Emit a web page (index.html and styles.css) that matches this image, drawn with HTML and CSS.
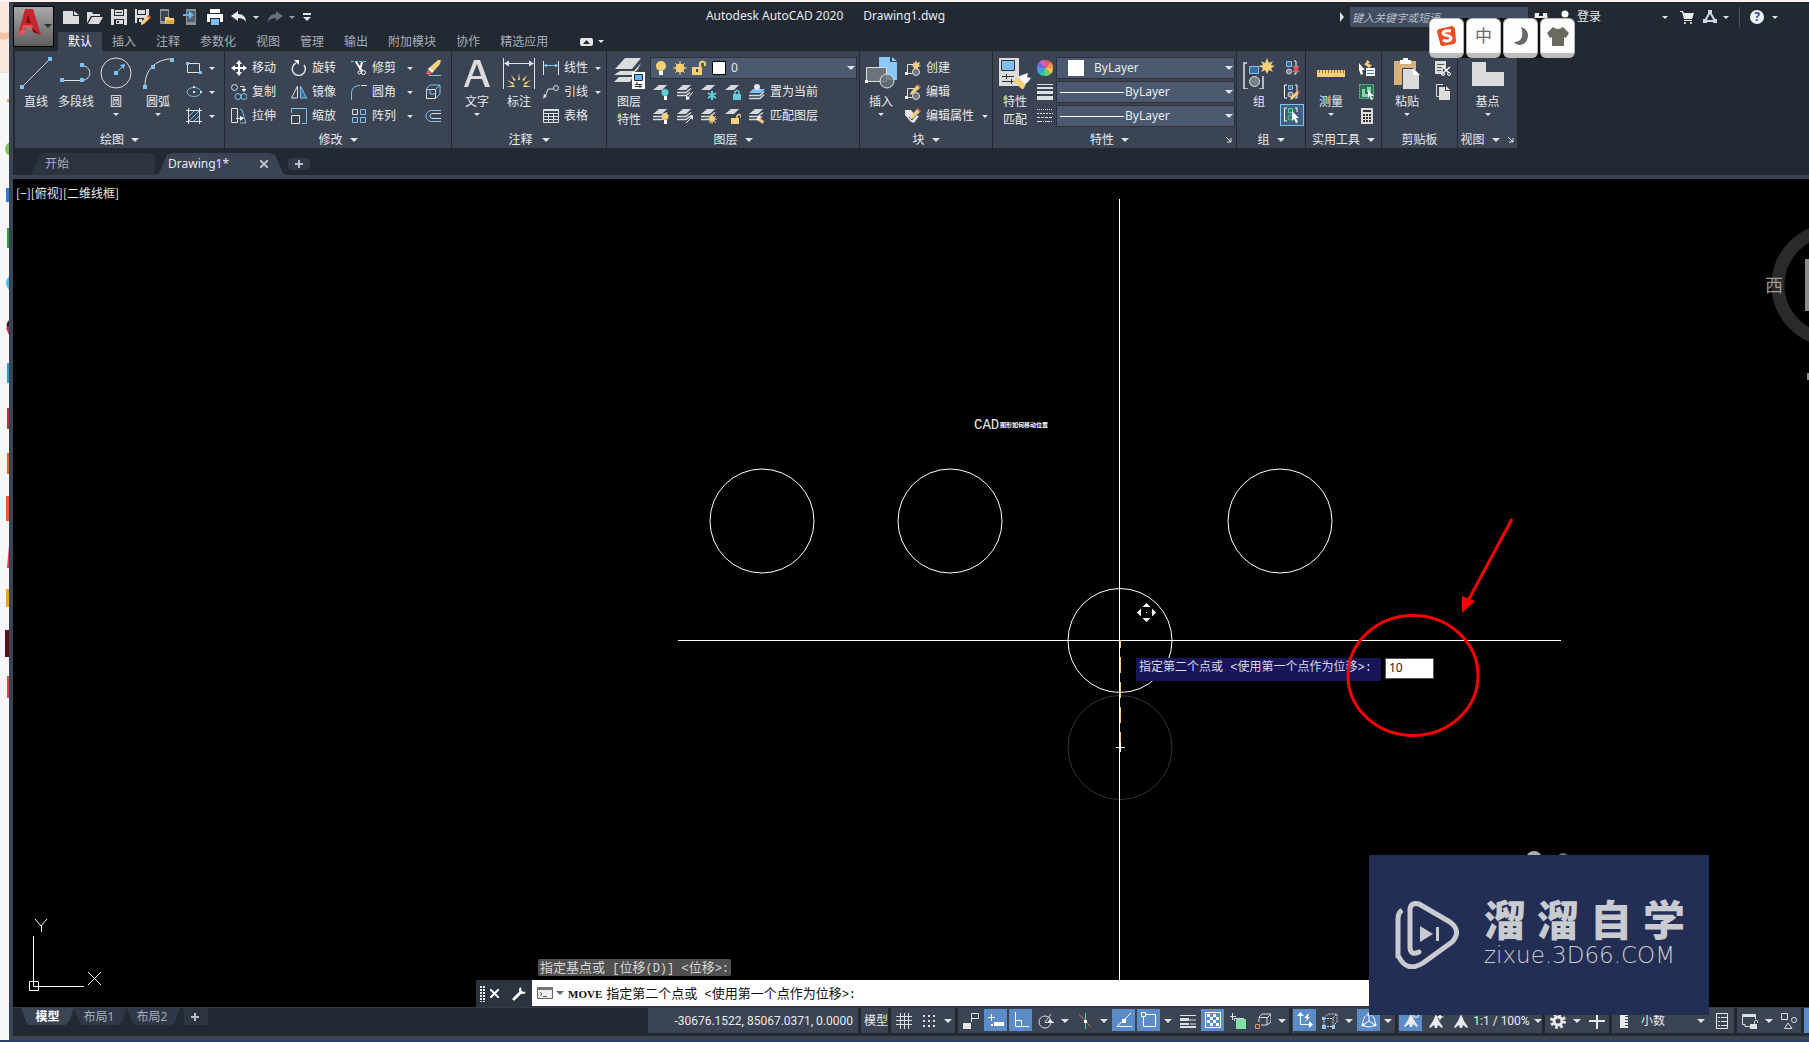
FILE: index.html
```html
<!DOCTYPE html>
<html lang="zh-CN">
<head>
<meta charset="utf-8">
<title>Autodesk AutoCAD 2020 - Drawing1.dwg</title>
<link rel="stylesheet" href="styles.css">
</head>
<body>
<svg class="sprite" aria-hidden="true">
  <defs>
    <!-- quick access -->
    <symbol id="new" viewBox="0 0 16 16"><path fill="#dcdcdc" d="M0 2h10v5h6v8H0zM11 2l5 4h-5z"/></symbol>
    <symbol id="open" viewBox="0 0 16 16"><path fill="#dcdcdc" d="M0 3h5l1 2h7v2H4L0 14zM5 8h11l-4 7H1z"/></symbol>
    <symbol id="save" viewBox="0 0 16 16"><path fill="#dcdcdc" d="M0 0h16v16H0z"/><path fill="#222933" d="M3 0h10v7H3zM3 10h10v6H3z"/><path fill="#dcdcdc" d="M4 1h8v5H4zM5 11h7v4H5z"/><path fill="#222933" d="M5 3h6v1H5zM6 12h2v2H6z"/></symbol>
    <symbol id="saveas" viewBox="0 0 16 16"><path fill="#dcdcdc" d="M0 0h14v6l-7 8H0z"/><path fill="#222933" d="M2 0h9v6H2zM2 9h7v5H2z"/><path fill="#dcdcdc" d="M3 1h7v4H3zM4 10h3v3H4z"/><path fill="#f7cf7a" d="M6 13l6-6 3 2-6 6-3 1z"/><path fill="#e0525a" d="M12 7l2-1 2 2-1 2z"/></symbol>
    <symbol id="webopen" viewBox="0 0 16 16"><path fill="#8d9299" d="M1 0h9v15H1z"/><path fill="#3c4552" d="M2 2h7v10H2z"/><path fill="#f7cf7a" d="M6 8h4l1 1h4v6H6z"/><path fill="#d9a94a" d="M8 11h8l-2 4H6z"/></symbol>
    <symbol id="websave" viewBox="0 0 16 16"><path fill="#8d9299" d="M3 0h10v16H3z"/><path fill="#56606d" d="M4 2h8v11H4z"/><path fill="#62b6f5" d="M0 5h6V2l5 4-5 4V7H0z"/></symbol>
    <symbol id="print" viewBox="0 0 16 16"><path fill="#fff" d="M3 0h10v4H3zM0 5h16v8h-3V9H3v4H0z"/><path fill="#7cc0f7" d="M4 10h8v6H4z"/></symbol>
    <symbol id="undo" viewBox="0 0 16 16"><path fill="currentColor" d="M0 7l7-5v3c5 0 8 3 8 8-2-3-4-4-8-4v3z"/></symbol>
    <symbol id="redo" viewBox="0 0 16 16"><path fill="currentColor" d="M16 7L9 2v3c-5 0-8 3-8 8 2-3 4-4 8-4v3z"/></symbol>
    <!-- draw -->
    <symbol id="line" viewBox="0 0 32 32"><path stroke="#dcdfe3" d="M3 29L29 3"/><path fill="#7fc1f0" d="M0 28h4v4H0zM28 0h4v4h-4z"/></symbol>
    <symbol id="pline" viewBox="0 0 32 32"><path stroke="#dcdfe3" fill="none" d="M2 23.500h20c11-1 10-15-1-15"/><path fill="#7fc1f0" d="M0 21h4v4H0zM20 21h4v4h-4zM20 6h4v4h-4z"/></symbol>
    <symbol id="circle" viewBox="0 0 32 32"><circle cx="16" cy="16" r="15" fill="none" stroke="#dcdfe3"/><path stroke="#7fc1f0" d="M16 16l7-7"/><path fill="#7fc1f0" d="M14 14h4v4h-4zM20 8l5-1-1 5z"/></symbol>
    <symbol id="arc" viewBox="0 0 32 32"><path fill="none" stroke="#dcdfe3" d="M3 29C3 12 14 3 28 2"/><path fill="#7fc1f0" d="M1 28h4v4H1zM9 8h4v4H9zM28 1h4v4h-4z"/></symbol>
    <symbol id="rect" viewBox="0 0 16 16"><path fill="none" stroke="#dcdfe3" d="M1.500 3.500h12v9h-12z"/><path fill="#7fc1f0" d="M0 2h3v3H0zM13 11h3v3h-3z"/></symbol>
    <symbol id="ellipse" viewBox="0 0 16 16"><ellipse cx="8" cy="8" rx="7" ry="4.500" fill="none" stroke="#7fb3dc"/><path fill="#cfe3f2" d="M7 7h2v2H7zM14 7h2v2h-2zM7 2h2v2H7z"/></symbol>
    <symbol id="hatch" viewBox="0 0 16 16"><path stroke="#7fc1f0" d="M3 8l5-5M3 13L13 3M8 13l5-5"/><path stroke="#dcdfe3" d="M2.500 0v16M13.500 0v16M0 2.500h16M0 13.500h16"/></symbol>
    <!-- modify -->
    <symbol id="move" viewBox="0 0 16 16"><path stroke="#fff" stroke-width="2" d="M8 2v12M2 8h12"/><path fill="#fff" d="M8 0l3 4H5zM8 16l3-4H5zM0 8l4-3v6zM16 8l-4-3v6z"/></symbol>
    <symbol id="rotate" viewBox="0 0 16 16"><path fill="none" stroke="#dcdfe3" stroke-width="1.500" d="M5 3a6.500 6.500 0 1 0 8 2"/><path fill="#fff" d="M3 0h5v5z"/></symbol>
    <symbol id="trim" viewBox="0 0 16 16"><path stroke="#7fc1f0" stroke-dasharray="3 1" d="M0 1.500h16"/><path stroke="#fff" stroke-width="2" fill="none" d="M5 2l6 9M11 2L9 10"/><circle cx="8.500" cy="12.500" r="1.500" fill="none" stroke="#fff"/><circle cx="12.500" cy="12.500" r="2" fill="none" stroke="#fff"/></symbol>
    <symbol id="erase" viewBox="0 0 16 16"><path stroke="#7fc1f0" d="M4 15.500h12"/><path fill="#f7cf7a" d="M13 0h3l-1 4-6 7-4-4z"/><path fill="#fff" d="M5 7l4 4-2 2-4-4z"/><path fill="#e0605a" d="M3 9l4 4-3 2-3-1z"/></symbol>
    <symbol id="copy" viewBox="0 0 16 16"><g fill="none" stroke="#dcdfe3"><circle cx="3.500" cy="3.500" r="3"/><path d="M9 2.500h4v3"/></g><path fill="#fff" d="M10.500 5h5L13 8z"/><g fill="none" stroke="#7fc1f0"><circle cx="7" cy="12.500" r="3"/><circle cx="13" cy="12.500" r="3"/></g></symbol>
    <symbol id="mirror" viewBox="0 0 16 16"><path fill="none" stroke="#dcdfe3" d="M6.500 2v12h-6z"/><path fill="#3d6f9b" stroke="#7fc1f0" d="M9.500 2v12h6z"/></symbol>
    <symbol id="fillet" viewBox="0 0 16 16"><path fill="none" stroke="#7fc1f0" d="M.500 16v-6C.500 4 4 1.500 9 1.500"/><path stroke="#dcdfe3" d="M10 1.500h6"/></symbol>
    <symbol id="box" viewBox="0 0 16 16"><path fill="none" stroke="#dcdfe3" d="M1.500 5.500h9v9h-9z"/><path fill="none" stroke="#7fc1f0" d="M1 5l4-4h10v9l-4 4M11 5l4-4M5 5v5h5"/></symbol>
    <symbol id="stretch" viewBox="0 0 16 16"><path fill="none" stroke="#dcdfe3" d="M.500.500h6v14h-6zM5 10.500h6"/><path fill="#fff" d="M9 8l4 2-4 3z"/><path fill="none" stroke="#7fc1f0" d="M9 1l2 1 4 13H9"/></symbol>
    <symbol id="scale" viewBox="0 0 16 16"><path fill="none" stroke="#dcdfe3" d="M.500 7.500h8v8h-8z"/><path fill="none" stroke="#7fc1f0" d="M.500 5V.500h15v15H11"/></symbol>
    <symbol id="array" viewBox="0 0 16 16"><path fill="none" stroke="#dcdfe3" d="M1.500 1.500h5v5h-5z"/><path fill="none" stroke="#7fc1f0" d="M9.500 1.500h5v5h-5zM1.500 9.500h5v5h-5zM9.500 9.500h5v5h-5z"/></symbol>
    <symbol id="offset" viewBox="0 0 16 16"><path fill="none" stroke="#7fc1f0" d="M16 2.500H7c-8 0-8 11 0 11h9"/><path fill="none" stroke="#dcdfe3" d="M16 5.500H8c-4 0-4 5 0 5h8"/></symbol>
    <!-- annotate -->
    <symbol id="textbig" viewBox="0 0 32 32"><path fill="#dcdcdc" d="M13 3h6l10 27h-5l-3-8H10l-3 8H3zM16 7l-5 12h9z"/></symbol>
    <symbol id="dimbig" viewBox="0 0 32 32"><path stroke="#dcdfe3" d="M.500 1v31M31.500 1v31M2 6.500h28"/><path fill="#dcdfe3" d="M1 6.500l5-3v6zM31 6.500l-5-3v6z"/><path fill="#f3d27c" d="M15 23l1-7 1 7zM11 24l-3-6 5 5zM21 24l3-6-5 5zM11 26l-7-3 6 5zM21 26l7-3-6 5zM12 30H3l8-2zM20 30h9l-8-2z"/></symbol>
    <symbol id="linear" viewBox="0 0 16 16"><path stroke="#dcdfe3" d="M.500 1v14M15.500 1v14"/><path stroke="#7fc1f0" d="M1 5.500h14"/><path fill="#7fc1f0" d="M1 5.500l3-2v4zM15 5.500l-3-2v4z"/></symbol>
    <symbol id="leader" viewBox="0 0 16 16"><path fill="none" stroke="#dcdfe3" d="M2 13l3-8h5"/><circle cx="13" cy="4" r="2.500" fill="none" stroke="#dcdfe3"/><path fill="#dcdfe3" d="M0 15l1-5 3 2z"/></symbol>
    <symbol id="table" viewBox="0 0 16 16"><path fill="none" stroke="#dcdfe3" d="M.500 1.500h15v13H.500zM1 5.500h14M1 8.500h14M1 11.500h14M5.500 5v9M10.500 5v9"/><path fill="#dcdfe3" d="M1 2h14v1H1z"/></symbol>
    <!-- layers -->
    <symbol id="layersbig" viewBox="0 0 32 32"><path fill="#dcdcdc" d="M12 1h16l-9 11H2zM7 14h14l7-8-3 6-6 6H1zM6 20h14l-3 5H1z"/><path fill="#fff" d="M19 15h13v17H19z"/><path fill="#62b6f5" stroke="#222933" d="M21.500 17.500h8v6h-8z"/><path fill="none" stroke="#333" d="M22 27.500h7M22 29.500h7M24 25v3M27 28v3"/></symbol>
    <symbol id="sheet" viewBox="0 0 16 16"><path fill="#d5d8dc" d="M6 1h8L9 6H0z"/></symbol>
    <symbol id="sheets" viewBox="0 0 16 16"><path fill="#d5d8dc" d="M6 1h8L9 6H0z"/><path fill="none" stroke="#d5d8dc" stroke-width="1.500" d="M0 8.500h9l5-4M0 11.500h9l4-3"/></symbol>
    <symbol id="lay-off" viewBox="0 0 16 16"><use href="#sheet"/><circle cx="12" cy="8.500" r="3.500" fill="#5fd0d8"/><path fill="#fff" d="M11 12h3v4h-3z"/></symbol>
    <symbol id="lay-iso" viewBox="0 0 16 16"><use href="#sheets"/><path stroke="#fff" d="M16 8l-6 7"/><path fill="#fff" d="M9 16v-5l4 4z"/></symbol>
    <symbol id="lay-frz" viewBox="0 0 16 16"><use href="#sheet"/><path stroke="#5fd0d8" stroke-width="2" d="M11 7v9M7 9l8 5M15 9l-8 5"/></symbol>
    <symbol id="lay-lock" viewBox="0 0 16 16"><use href="#sheet"/><path fill="#5fd0d8" d="M8 10h8v6H8z"/><path fill="none" stroke="#5fd0d8" stroke-width="1.500" d="M10 10V8q2-3 4 0v2"/></symbol>
    <symbol id="lay-cur" viewBox="0 0 16 16"><path fill="#7fc1f0" d="M4 5h12l-4 4H0z"/><circle cx="8" cy="3" r="3" fill="#e4e6e8"/><path fill="none" stroke="#d5d8dc" stroke-width="1.500" d="M0 11.500h11l4-4M0 14.500h11l4-4"/></symbol>
    <symbol id="lay-on" viewBox="0 0 16 16"><use href="#sheets"/><circle cx="12" cy="8.500" r="3.500" fill="#f7cf7a"/><path fill="#fff" d="M11 12h3v4h-3z"/></symbol>
    <symbol id="lay-uniso" viewBox="0 0 16 16"><use href="#sheets"/><path stroke="#fff" d="M9 15l6-6"/><path fill="#fff" d="M16 7v5l-4-4z"/></symbol>
    <symbol id="lay-thaw" viewBox="0 0 16 16"><use href="#sheets"/><circle cx="11" cy="11" r="3" fill="#f7cf7a"/><path stroke="#f7cf7a" d="M11 6v10M6 11h10M8 8l7 7M15 8l-7 7"/></symbol>
    <symbol id="lay-unlock" viewBox="0 0 16 16"><use href="#sheet"/><path fill="#f7cf7a" d="M6 10h8v6H6z"/><path fill="none" stroke="#f7cf7a" stroke-width="1.500" d="M12 10V8q2-3 4 0v2"/></symbol>
    <symbol id="lay-match" viewBox="0 0 16 16"><use href="#sheets"/><path fill="#f7cf7a" d="M9 9l6 4-1 3-6-4z"/><path stroke="#fff" stroke-width="2" d="M8 12l3-4"/></symbol>
    <symbol id="bulb" viewBox="0 0 16 16"><circle cx="8" cy="6" r="5" fill="#f9cf74"/><path fill="#fff" d="M6 11h4v4H6z"/></symbol>
    <symbol id="sun" viewBox="0 0 16 16"><circle cx="8" cy="8" r="4.500" fill="#f9cf74"/><path stroke="#f9cf74" d="M8 1v14M1 8h14M3 3l10 10M13 3L3 13"/></symbol>
    <symbol id="unlock" viewBox="0 0 16 16"><path fill="#f9cf74" d="M1 7h10v8H1z"/><path fill="none" stroke="#f9cf74" stroke-width="2" d="M9 7V3q2.500-3 5 0v3"/><path fill="#3b4453" d="M5 9h2v3H5z"/></symbol>
    <!-- block -->
    <symbol id="insert" viewBox="0 0 32 32"><path fill="#8ac8f8" d="M14 0h11v5h7v18H14z"/><path fill="#8ac8f8" d="M27 0l5 4h-5z"/><path fill="#6d727b" stroke="#dcdfe3" d="M1.500 10.500h20v14h-20z"/><circle cx="22" cy="24" r="7" fill="#6d727b" fill-opacity=".8" stroke="#dcdfe3"/><path fill="#fff" d="M0 23h3v3H0z"/></symbol>
    <symbol id="blk" viewBox="0 0 16 16"><path fill="none" stroke="#dcdfe3" d="M9 4.500H2.500v9H8"/><circle cx="11" cy="12" r="3.500" fill="#6d727b" stroke="#dcdfe3"/><path fill="#fff" d="M0 12h3v3H0z"/></symbol>
    <symbol id="blk-new" viewBox="0 0 16 16"><use href="#blk"/><path fill="#f7cf7a" d="M11 0l1 3 3-1-1 3 2 1-3 1v3l-2-2-3 2 1-3-3-1 3-1-1-3 2 1z"/></symbol>
    <symbol id="pen" viewBox="0 0 16 16"><path fill="#f7cf7a" d="M6 8l6-7 3 3-7 6-3 1z"/><path fill="#e0525a" d="M12 1l1-1 3 3-1 1z"/></symbol>
    <symbol id="blk-edit" viewBox="0 0 16 16"><use href="#blk"/><use href="#pen"/></symbol>
    <symbol id="attr" viewBox="0 0 16 16"><path fill="#e4e6e8" d="M0 2h6l4 5 4 1-5 7-3-1-6-7z"/><path stroke="#3b4453" fill="none" d="M4 9l3 3 4-5"/><use href="#pen"/></symbol>
    <!-- properties -->
    <symbol id="match" viewBox="0 0 32 32"><path fill="#dcdcdc" d="M0 1h20v28H0z"/><path fill="#7cc0f7" stroke="#333" d="M2.500 3.500h13v10h-13z"/><path stroke="#333" d="M3 19.500h12M3 24.500h12M7.500 17v5M12.500 22v5"/><path fill="#f7cf7a" d="M14 24l6-4 7 7-3 6z"/><path fill="#fff" d="M19 20l4-2 6-2-1 4 4 1-3 4-3 2z"/></symbol>
    <symbol id="wheel" viewBox="0 0 16 16"><path fill="#e9575c" d="M8 0q4 0 6 2l-6 6z"/><path fill="#f59150" d="M14 2q2 2 2 6H8z"/><path fill="#f5c34e" d="M16 8q0 4-2 6L8 8z"/><path fill="#7ccb5e" d="M14 14q-2 2-6 2V8z"/><path fill="#36c6a8" d="M8 16q-4 0-6-2l6-6z"/><path fill="#3ba4e8" d="M2 14q-2-2-2-6h8z"/><path fill="#6d6be0" d="M0 8q0-4 2-6l6 6z"/><path fill="#cf62c9" d="M2 2q2-2 6-2v8z"/></symbol>
    <symbol id="lweight" viewBox="0 0 16 16"><path fill="#dcdfe3" d="M0 0h16v1H0zM0 3h16v2H0zM0 7h16v3H0zM0 12h16v4H0z"/></symbol>
    <symbol id="ltype" viewBox="0 0 16 16"><path stroke="#dcdfe3" stroke-dasharray="1 1" d="M0 1.500h16"/><path stroke="#dcdfe3" stroke-dasharray="2 1" d="M0 5.500h16"/><path stroke="#dcdfe3" stroke-dasharray="3 1" d="M0 9.500h16"/><path stroke="#dcdfe3" stroke-dasharray="5 1 1 1" d="M0 13.500h16"/></symbol>
    <!-- group, utilities, clipboard, view -->
    <symbol id="groupbig" viewBox="0 0 32 32"><path fill="none" stroke="#dcdfe3" stroke-width="1.500" d="M4 6H1v26h4M16 32h4V19"/><path fill="#3d6f9b" stroke="#7fc1f0" d="M6.500 9.500h9v7h-9z"/><circle cx="11.500" cy="24.500" r="5" fill="#7b7f86" stroke="#dcdfe3"/><path fill="#f7cf7a" d="M24 1l2 5 4-2-2 4 4 1-4 2 2 4-4-2-2 4-2-4-4 2 2-4-5-2 5-1-2-4 4 2z"/></symbol>
    <symbol id="grp" viewBox="0 0 16 16"><path fill="none" stroke="#fff" d="M3 1H.500v13H3M11 1h2v13h-2"/><path fill="#3d6f9b" stroke="#7fc1f0" d="M4.500 1.500h4v4h-4z"/><circle cx="6.500" cy="10.500" r="2.500" fill="#7b7f86" stroke="#dcdfe3"/></symbol>
    <symbol id="ungroup" viewBox="0 0 16 16"><path fill="none" stroke="#fff" d="M10 1h2v13h-2"/><path fill="#3d6f9b" stroke="#7fc1f0" d="M2.500 1.500h5v5h-5z"/><circle cx="5" cy="11.500" r="2.500" fill="#7b7f86" stroke="#dcdfe3"/><path stroke="#e0525a" stroke-width="2" d="M9 6l6 6M15 6l-6 6"/></symbol>
    <symbol id="grpedit" viewBox="0 0 16 16"><use href="#grp"/><path fill="#f7cf7a" d="M7 13l6-6 2 2-6 6-3 1z"/><path fill="#e0525a" d="M13 7l1-1 2 2-1 2z"/></symbol>
    <symbol id="grpsel" viewBox="0 0 16 16"><path fill="none" stroke="#fff" d="M3 1H.500v13H3M11 1h2v4"/><path fill="#2f7d5c" stroke="#5fcf96" d="M4.500 1.500h4v4h-4z"/><circle cx="6.500" cy="10.500" r="2.500" fill="#2f7d5c" stroke="#5fcf96"/><path fill="#fff" d="M8 4l7 7h-3l2 4-2 1-2-4-2 2z"/></symbol>
    <symbol id="ruler" viewBox="0 0 32 32"><path fill="#f7cf7a" d="M2 13h28v7H2z"/><path stroke="#9b7327" stroke-dasharray="1 2" stroke-width="3" d="M4 14.500h25"/></symbol>
    <symbol id="qselect" viewBox="0 0 16 16"><path fill="#fff" d="M0 3l6 7H3l1 4-2 1-2-5z"/><path fill="#f7cf7a" d="M8 0l3 2-2 2 4 1-3 3-5-4 2-1z"/><path fill="#fff" d="M7 8h9v8H7z"/><path stroke="#3b82c4" d="M8 10.500h7M8 13.500h7"/></symbol>
    <symbol id="selall" viewBox="0 0 16 16"><path fill="#2f6b55" stroke="#5fcf96" stroke-dasharray="2 1" d="M.500.500h14v14H.500z"/><path fill="#7fd9ac" d="M3 5h3v5h3v3H3zM8 3h4v5H8z"/><path fill="#fff" d="M9 6l6 6h-3l2 3-2 1-1-4-2 2z"/></symbol>
    <symbol id="calc" viewBox="0 0 16 16"><path fill="#dcdcdc" d="M2 0h12v16H2z"/><path stroke="#333" stroke-width="2" d="M4 3h8"/><path stroke="#333" stroke-width="2" stroke-dasharray="2 1" d="M4 7h8M4 10h8M4 13h8"/></symbol>
    <symbol id="paste" viewBox="0 0 32 32"><path fill="#d6b27a" d="M3 4h22v24H3z"/><path fill="#fff" d="M9 3h3V1h5v2h3v4H9z"/><path fill="#dcdcdc" stroke="#3b4453" d="M11.500 11.500h11l6 6v15h-17z"/><path fill="#fff" d="M22 11v7h7z"/></symbol>
    <symbol id="cut" viewBox="0 0 16 16"><path fill="#dcdcdc" d="M0 1h11v7H8v6H0z"/><path stroke="#555" d="M2 4.500h7M2 7.500h5M2 10.500h4"/><path stroke="#fff" stroke-width="1.500" d="M7 6l7 7M15 7l-8 7"/><circle cx="8" cy="14" r="1.500" fill="none" stroke="#fff"/><circle cx="14" cy="14" r="1.500" fill="none" stroke="#fff"/></symbol>
    <symbol id="copyclip" viewBox="0 0 16 16"><path fill="none" stroke="#dcdcdc" d="M8 .500H1.500v12H4"/><path fill="#dcdcdc" d="M4 3h6v4h5v9H4zM11 2l4 4h-4z"/></symbol>
    <symbol id="base" viewBox="0 0 32 32"><path fill="#dcdcdc" d="M0 5h14v10h18v14H0z"/></symbol>
    <!-- status bar -->
    <symbol id="s-grid" viewBox="0 0 16 16"><path stroke="#dcdfe3" d="M4.500 0v16M8.500 0v16M12.500 0v16M0 3.500h16M0 7.500h16M0 11.500h16"/></symbol>
    <symbol id="s-snap" viewBox="0 0 16 16"><path stroke="#dcdfe3" stroke-width="2" stroke-dasharray="2 3" d="M2 3h12M2 8h12M2 13h12"/></symbol>
    <symbol id="s-infer" viewBox="0 0 16 16"><path fill="none" stroke="#dcdfe3" d="M15.500.500h-7v5h7zM8.500 5v4"/><path fill="#e4e6e8" d="M0 10h8v6H0z"/></symbol>
    <symbol id="s-dyn" viewBox="0 0 16 16"><path stroke="#fff" d="M0 5.500h7M3.500 2v7"/><path fill="#fff" d="M6 10h10v4H6z"/><path fill="#fff" d="M3 12h2v2H3z"/></symbol>
    <symbol id="s-ortho" viewBox="0 0 16 16"><path fill="none" stroke="#fff" d="M2.500 0v14.500H16M3 8.500h5.500V14"/></symbol>
    <symbol id="s-polar" viewBox="0 0 16 16"><circle cx="7" cy="9" r="6" fill="none" stroke="#dcdfe3"/><path stroke="#dcdfe3" d="M7 9.500h9M7 9l6-8"/><path fill="#fff" d="M12 6l3 3h-5z"/></symbol>
    <symbol id="s-iso" viewBox="0 0 16 16"><path stroke="#e06a6a" d="M2 1l12 13"/><path stroke="#5fcf96" d="M8.500 0v16"/><path fill="#fff" d="M7 7h3v3H7z"/></symbol>
    <symbol id="s-otrack" viewBox="0 0 16 16"><path fill="none" stroke="#fff" d="M15 1L1 14.500h15"/><path fill="#fff" d="M6 7h4v4H6z"/></symbol>
    <symbol id="s-osnap" viewBox="0 0 16 16"><path fill="none" stroke="#fff" d="M5 2.500h9.500v12h-12V5M.500.500h4v4h-4z"/></symbol>
    <symbol id="s-lw" viewBox="0 0 16 16"><path stroke="#dcdfe3" d="M0 2.500h16M8 7h8M10 11h6"/><path fill="#dcdfe3" d="M0 5h9v3H0zM0 10h9v2H0zM0 13h16v2H0z"/></symbol>
    <symbol id="s-trans" viewBox="0 0 16 16"><path fill="none" stroke="#fff" d="M.500.500h15v15H.500z"/><path fill="#fff" d="M2 2h3v3H2zM8 2h3v3H8zM5 5h3v3H5zM11 5h3v3h-3zM2 8h3v3H2zM8 8h3v3H8zM5 11h3v3H5zM11 11h3v3h-3z"/></symbol>
    <symbol id="s-cycle" viewBox="0 0 16 16"><path stroke="#dcdfe3" d="M0 3.500h6M2.500 0v7"/><path fill="none" stroke="#dcdfe3" d="M4.500 8V5.500H14"/><path fill="#7fe0a0" d="M6 6h10v10H6z"/></symbol>
    <symbol id="s-3d" viewBox="0 0 16 16"><path fill="none" stroke="#dcdfe3" d="M4 9V4.500h8V12H6M4 4l3-3h9v8l-4 3M12 5l4-4"/><path fill="none" stroke="#e8906a" d="M.500 11.500h4v4h-4z"/></symbol>
    <symbol id="s-ucs" viewBox="0 0 16 16"><path fill="none" stroke="#fff" d="M3.500 2v10.500H15"/><path fill="#fff" d="M0 4l3.500-4L7 4zM12 9l4 3.500-4 3.500zM12 1L7 6h3l-2 4 5-5h-2z"/></symbol>
    <symbol id="s-filter" viewBox="0 0 16 16"><path fill="none" stroke="#dcdfe3" stroke-dasharray="2 1" d="M2 5.500h9v8H2zM2 5l4-4h9v8l-4 4M11 5l4-4"/><path fill="#8fc7e8" d="M0 12h4v4H0zM10 12h3v4h-3zM0 4h3v3H0z"/></symbol>
    <symbol id="s-gizmo" viewBox="0 0 16 16"><path fill="none" stroke="#fff" d="M8 2C4 3 1 8 2 13q6 4 12 0c1-5-2-10-6-11zM8 2v7l-6 4M8 9l6 4"/><circle cx="8" cy="2" r="1.500" fill="#fff"/><circle cx="2" cy="13" r="1.500" fill="#fff"/><circle cx="14" cy="13" r="1.500" fill="#fff"/></symbol>
    <symbol id="s-anno" viewBox="0 0 16 16"><path fill="#e8eaec" d="M8 1l3 7 4 6-1 1-4-3-1 3H7l-1-3-4 3-1-1 4-6z"/></symbol>
    <symbol id="s-annovis" viewBox="0 0 16 16"><use href="#s-anno"/><circle cx="13" cy="3" r="2.500" fill="none" stroke="#fff"/></symbol>
    <symbol id="s-annoauto" viewBox="0 0 16 16"><use href="#s-anno"/><path fill="#fff" d="M12 0l1 3 3 1-3 1-1 3-1-3-3-1 3-1z"/></symbol>
    <symbol id="gear" viewBox="0 0 16 16"><circle cx="8" cy="8" r="4" fill="none" stroke="#e8eaec" stroke-width="3"/><circle cx="8" cy="8" r="6.500" fill="none" stroke="#e8eaec" stroke-width="3" stroke-dasharray="2.600 2.500"/></symbol>
    <symbol id="s-plus" viewBox="0 0 16 16"><path stroke="#e8eaec" stroke-width="2" d="M8 0v16M0 8h16"/></symbol>
    <symbol id="s-units" viewBox="0 0 16 16"><path fill="#e8eaec" d="M4 1h8v2H9v1h3v2H9v1h3v2H9v1h3v2H9v1h3v2H4z"/></symbol>
    <symbol id="s-props" viewBox="0 0 16 16"><path fill="none" stroke="#e8eaec" d="M2.500.500h11v15h-11z"/><path stroke="#e8eaec" stroke-dasharray="2 1 6 9" d="M4 4.500h9M4 8.500h9M4 12.500h9"/></symbol>
    <symbol id="s-lockui" viewBox="0 0 16 16"><path fill="none" stroke="#dcdfe3" d="M8 13.500H3v-2H.500V1.500h13V6"/><path fill="#dcdfe3" d="M1 1h12v3H1zM8 11h7v5H8z"/><path fill="none" stroke="#dcdfe3" d="M12.500 11V8q1.500-2 3 0v2"/></symbol>
    <symbol id="s-isolate" viewBox="0 0 16 16"><path fill="none" stroke="#dcdfe3" d="M.500.500h6v6h-6zM7 10l4 5.500H3.500z"/><circle cx="13" cy="7" r="2.500" fill="none" stroke="#dcdfe3"/></symbol>
  </defs>
</svg>

<div class="desktop">
  <div class="shortcuts" aria-hidden="true">
    <svg width="9" height="1038"><path fill="#fbe8dc" d="M0 0h9v70H0z"/><path fill="#f5c3a6" d="M0 30q4 2 9 0v6q-5 3-9 1z"/><path fill="#e3e4e8" d="M0 70h9v1H0z"/><path fill="#d9b25c" d="M7 97h2v3H7z"/><circle cx="12" cy="147" r="7" fill="#80c45d"/><path fill="#2d7be0" d="M6 186h3v14H6z"/><path fill="#2da03a" d="M7 226h2v20H7z"/><circle cx="15" cy="281" r="9" fill="#4bbbe8"/><path fill="#222" d="M9 318q-5 6 0 9z"/><path fill="#c62b50" d="M6 326l3 7v-9z"/><path fill="#27a0d8" d="M7 361h2v20H7z"/><path fill="#b3383f" d="M7 406h2v21H7z"/><path fill="#d66a20" d="M7 451h2v21H7z"/><path fill="#ef5a1e" d="M6 494h3v25H6z"/><path fill="#d6484c" d="M9 543v23H7z"/><path fill="#f3a11c" d="M6 587h3v18H6z"/><path fill="#5b0f14" d="M5 628h4v27H5z"/><path fill="#d24a4a" d="M7 674h2v22H7z"/></svg>
  </div>

  <main class="app">
    <header class="titlebar">
      <nav class="qat" aria-label="快速访问工具栏">
        <button aria-label="新建"><svg class="i16"><use href="#new"/></svg></button>
        <button aria-label="打开"><svg class="i16"><use href="#open"/></svg></button>
        <button aria-label="保存"><svg class="i16"><use href="#save"/></svg></button>
        <button aria-label="另存为"><svg class="i16"><use href="#saveas"/></svg></button>
        <button aria-label="从 Web 打开"><svg class="i16"><use href="#webopen"/></svg></button>
        <button aria-label="保存到 Web"><svg class="i16"><use href="#websave"/></svg></button>
        <button aria-label="打印"><svg class="i16"><use href="#print"/></svg></button>
        <button class="with-caret" aria-label="放弃"><svg class="i16"><use href="#undo"/></svg><i class="caret sm"></i></button>
        <button class="with-caret dim" aria-label="重做"><svg class="i16"><use href="#redo"/></svg><i class="caret sm"></i></button>
        <button class="customize" aria-label="自定义"><i class="bar"></i><i class="caret"></i></button>
      </nav>
      <h1 class="doc-title"><span>Autodesk AutoCAD 2020</span><span>Drawing1.dwg</span></h1>
      <div class="infocenter">
        <i class="caret side"></i>
        <input class="search" type="text" aria-label="搜索" placeholder="键入关键字或短语">
        <button class="find" aria-label="查找"><svg width="14" height="14" viewBox="0 0 14 14"><path fill="#e8eaec" d="M1 3h4v3h4V3h4l1 9H9V9H5v3H0z"/></svg></button>
        <button class="login"><svg width="10" height="14" viewBox="0 0 10 14"><circle cx="5" cy="4" r="3.500" fill="#fff"/><path fill="#fff" d="M0 14q0-6 5-6t5 6z"/></svg>登录<i class="caret sm"></i></button>
        <button class="cart" aria-label="商店"><svg width="14" height="14" viewBox="0 0 14 14"><path fill="#e8eaec" d="M0 1h3l1 2h10l-2 6H4L2 2H0zM4 10h8v1H4z"/><circle cx="5" cy="13" r="1" fill="#fff"/><circle cx="11" cy="13" r="1" fill="#fff"/></svg></button>
        <button class="a360" aria-label="A360"><svg width="14" height="14" viewBox="0 0 14 14"><path fill="none" stroke="#cfd8ea" stroke-width="2" d="M7 2L2 11h10z"/><path fill="#cfd8ea" d="M5 0h4v3H5zM0 9h4v4H0zM10 9h4v4h-4z"/></svg><i class="caret sm"></i></button>
        <button class="help" aria-label="帮助"><b>?</b><i class="caret sm"></i></button>
      </div>
    </header>

    <button class="appmenu" aria-label="应用程序菜单"><svg width="39" height="39" viewBox="0 0 39 39"><path fill="#c4262e" d="M11 2h8l8 26-7-3-2-6h-6l-3 8-5 1z"/><path fill="#7d1117" d="M14 8l3 8h-5zM18 20l8 8-7-3z"/><path fill="#e8525a" d="M5 25l5-5 1 7-7 1zM9 18h9l1 3H8z"/><path fill="#2a2d33" d="M30 17h8l-4 4z"/></svg></button>

    <nav class="tabs" aria-label="功能区">
      <button class="on">默认</button><button>插入</button><button>注释</button><button>参数化</button><button>视图</button><button>管理</button><button>输出</button><button>附加模块</button><button>协作</button><button>精选应用</button>
      <button class="minimize" aria-label="最小化"><svg width="13" height="8"><rect width="13" height="8" rx="2" fill="#e4e6e8"/><path fill="#222933" d="M6.500 2L10 6H3z"/></svg><i class="caret sm"></i></button>
    </nav>

    <section class="ribbon">
      <div class="panel p-draw">
        <div class="body">
          <button class="big"><svg class="i32"><use href="#line"/></svg>直线</button>
          <button class="big"><svg class="i32"><use href="#pline"/></svg>多段线</button>
          <button class="big"><svg class="i32"><use href="#circle"/></svg>圆<i class="caret sm"></i></button>
          <button class="big"><svg class="i32"><use href="#arc"/></svg>圆弧<i class="caret sm"></i></button>
          <div class="rows">
            <button class="tool" aria-label="矩形"><svg class="i16"><use href="#rect"/></svg><i class="caret sm"></i></button>
            <button class="tool" aria-label="椭圆"><svg class="i16"><use href="#ellipse"/></svg><i class="caret sm"></i></button>
            <button class="tool" aria-label="图案填充"><svg class="i16"><use href="#hatch"/></svg><i class="caret sm"></i></button>
          </div>
        </div>
        <h2>绘图<i class="caret"></i></h2>
      </div>

      <div class="panel p-modify">
        <div class="body">
          <div class="rows">
            <button class="tool"><svg class="i16"><use href="#move"/></svg>移动</button>
            <button class="tool"><svg class="i16"><use href="#copy"/></svg>复制</button>
            <button class="tool"><svg class="i16"><use href="#stretch"/></svg>拉伸</button>
          </div>
          <div class="rows">
            <button class="tool"><svg class="i16"><use href="#rotate"/></svg>旋转</button>
            <button class="tool"><svg class="i16"><use href="#mirror"/></svg>镜像</button>
            <button class="tool"><svg class="i16"><use href="#scale"/></svg>缩放</button>
          </div>
          <div class="rows wide">
            <button class="tool"><svg class="i16"><use href="#trim"/></svg>修剪<i class="caret sm"></i></button>
            <button class="tool"><svg class="i16"><use href="#fillet"/></svg>圆角<i class="caret sm"></i></button>
            <button class="tool"><svg class="i16"><use href="#array"/></svg>阵列<i class="caret sm"></i></button>
          </div>
          <div class="rows">
            <button class="tool" aria-label="删除"><svg class="i16"><use href="#erase"/></svg></button>
            <button class="tool" aria-label="分解"><svg class="i16"><use href="#box"/></svg></button>
            <button class="tool" aria-label="偏移"><svg class="i16"><use href="#offset"/></svg></button>
          </div>
        </div>
        <h2>修改<i class="caret"></i></h2>
      </div>

      <div class="panel p-annotate">
        <div class="body">
          <button class="big"><svg class="i32"><use href="#textbig"/></svg>文字<i class="caret sm"></i></button>
          <button class="big"><svg class="i32"><use href="#dimbig"/></svg>标注</button>
          <div class="rows">
            <button class="tool"><svg class="i16"><use href="#linear"/></svg>线性<i class="caret sm"></i></button>
            <button class="tool"><svg class="i16"><use href="#leader"/></svg>引线<i class="caret sm"></i></button>
            <button class="tool"><svg class="i16"><use href="#table"/></svg>表格</button>
          </div>
        </div>
        <h2>注释<i class="caret"></i></h2>
      </div>

      <div class="panel p-layers">
        <div class="body">
          <button class="big"><svg class="i32"><use href="#layersbig"/></svg>图层<br>特性</button>
          <div class="stack">
            <label class="combo layer">
              <svg class="i16"><use href="#bulb"/></svg><svg class="i16"><use href="#sun"/></svg><svg class="i16"><use href="#unlock"/></svg><i class="swatch"></i>
              <select aria-label="图层"><option>0</option></select><i class="caret"></i>
            </label>
            <div class="iconrow">
              <button aria-label="关"><svg class="i16"><use href="#lay-off"/></svg></button>
              <button aria-label="隔离"><svg class="i16"><use href="#lay-iso"/></svg></button>
              <button aria-label="冻结"><svg class="i16"><use href="#lay-frz"/></svg></button>
              <button aria-label="锁定"><svg class="i16"><use href="#lay-lock"/></svg></button>
              <button class="tool"><svg class="i16"><use href="#lay-cur"/></svg>置为当前</button>
            </div>
            <div class="iconrow">
              <button aria-label="打开图层"><svg class="i16"><use href="#lay-on"/></svg></button>
              <button aria-label="取消隔离"><svg class="i16"><use href="#lay-uniso"/></svg></button>
              <button aria-label="解冻"><svg class="i16"><use href="#lay-thaw"/></svg></button>
              <button aria-label="解锁"><svg class="i16"><use href="#lay-unlock"/></svg></button>
              <button class="tool"><svg class="i16"><use href="#lay-match"/></svg>匹配图层</button>
            </div>
          </div>
        </div>
        <h2>图层<i class="caret"></i></h2>
      </div>

      <div class="panel p-block">
        <div class="body">
          <button class="big"><svg class="i32"><use href="#insert"/></svg>插入<i class="caret sm"></i></button>
          <div class="rows">
            <button class="tool"><svg class="i16"><use href="#blk-new"/></svg>创建</button>
            <button class="tool"><svg class="i16"><use href="#blk-edit"/></svg>编辑</button>
            <button class="tool"><svg class="i16"><use href="#attr"/></svg>编辑属性<i class="caret sm"></i></button>
          </div>
        </div>
        <h2>块<i class="caret"></i></h2>
      </div>

      <div class="panel p-props">
        <div class="body">
          <button class="big"><svg class="i32"><use href="#match"/></svg>特性<br>匹配</button>
          <div class="rows">
            <span class="tool"><svg class="i16"><use href="#wheel"/></svg></span>
            <span class="tool"><svg class="i16"><use href="#lweight"/></svg></span>
            <span class="tool"><svg class="i16"><use href="#ltype"/></svg></span>
          </div>
          <div class="stack">
            <label class="combo color"><i class="swatch"></i><select aria-label="对象颜色"><option>ByLayer</option></select><i class="caret"></i></label>
            <label class="combo"><i class="rule"></i><select aria-label="线宽"><option>ByLayer</option></select><i class="caret"></i></label>
            <label class="combo"><i class="rule"></i><select aria-label="线型"><option>ByLayer</option></select><i class="caret"></i></label>
          </div>
        </div>
        <h2>特性<i class="caret"></i><svg class="launch"><path d="M1 1l5 5M6 2v4H2"/></svg></h2>
      </div>

      <div class="panel p-group">
        <div class="body">
          <button class="big"><svg class="i32"><use href="#groupbig"/></svg>组</button>
          <div class="rows">
            <button class="tool" aria-label="解除编组"><svg class="i16"><use href="#ungroup"/></svg></button>
            <button class="tool" aria-label="组编辑"><svg class="i16"><use href="#grpedit"/></svg></button>
            <button class="tool picked" aria-label="启用组选择"><svg class="i16"><use href="#grpsel"/></svg></button>
          </div>
        </div>
        <h2>组<i class="caret"></i></h2>
      </div>

      <div class="panel p-util">
        <div class="body">
          <button class="big"><svg class="i32"><use href="#ruler"/></svg>测量<i class="caret sm"></i></button>
          <div class="rows">
            <button class="tool" aria-label="快速选择"><svg class="i16"><use href="#qselect"/></svg></button>
            <button class="tool" aria-label="全部选择"><svg class="i16"><use href="#selall"/></svg></button>
            <button class="tool" aria-label="计算器"><svg class="i16"><use href="#calc"/></svg></button>
          </div>
        </div>
        <h2>实用工具<i class="caret"></i></h2>
      </div>

      <div class="panel p-util">
        <div class="body">
          <button class="big"><svg class="i32"><use href="#paste"/></svg>粘贴<i class="caret sm"></i></button>
          <div class="rows">
            <button class="tool" aria-label="剪切"><svg class="i16"><use href="#cut"/></svg></button>
            <button class="tool" aria-label="复制裁剪"><svg class="i16"><use href="#copyclip"/></svg></button>
          </div>
        </div>
        <h2>剪贴板</h2>
      </div>

      <div class="panel p-view">
        <div class="body">
          <button class="big"><svg class="i32"><use href="#base"/></svg>基点<i class="caret sm"></i></button>
        </div>
        <h2>视图<i class="caret"></i><svg class="launch"><path d="M1 1l5 5M6 2v4H2"/></svg></h2>
      </div>
    </section>

    <nav class="filetabs" aria-label="文件">
      <button class="file start">开始</button>
      <button class="file on">Drawing1*<svg width="8" height="8"><path d="M0 0l8 8M8 0L0 8"/></svg></button>
      <button class="add" aria-label="新图形"><svg width="8" height="8"><path d="M4 0v8M0 4h8"/></svg></button>
    </nav>

    <section class="canvas" aria-label="绘图区">
      <svg class="drawing">
        <g transform="translate(-13 -179)" fill="none" stroke="#fff">
          <circle cx="762" cy="521" r="52"/>
          <circle cx="950" cy="521" r="52"/>
          <circle cx="1280" cy="521" r="52"/>
          <circle cx="1120" cy="640.500" r="52"/>
          <circle cx="1120" cy="747.500" r="52" stroke="#333"/>
          <path d="M1119.500 199v781M678 640.500h883"/>
          <path stroke="#f0c878" stroke-dasharray="16 9" stroke-dashoffset="8" d="M1120.500 640v110"/>
          <path stroke="#fff" d="M1116 747.500h9M1120.500 743v9"/>
          <path fill="#fff" stroke="none" d="M1146.500 603l4 4h-8zM1146.500 622l4-4h-8zM1137 612.500l4-4v8zM1156 612.500l-4-4v8zM1146 612h1v1h-1z"/>
          <path d="M33.500 936v50.500H84M29.500 981.500h9v9h-9zM35 919l6 7 6-7M41.500 926v6M88 972l13 13M101 972l-13 13"/>
          <circle cx="1534" cy="859" r="8" fill="#b0b0b0" stroke="none"/>
          <circle cx="1563" cy="859" r="6" fill="#707070" stroke="none"/>
          <text class="cad" x="974" y="429">CAD</text>
          <text class="note" x="1000" y="427">图形如何移动位置</text>
        </g>
      </svg>
      <p class="viewlabel">[−][俯视][二维线框]</p>
      <div class="dyn">
        <label for="disp">指定第二个点或<code> &lt;</code>使用第一个点作为位移<code>&gt;:</code></label>
        <input id="disp" type="text" value="10">
      </div>
      <svg class="drawing markup">
        <g transform="translate(-13 -179)">
          <ellipse cx="1413" cy="675.500" rx="65" ry="60" fill="none" stroke="#fb0000" stroke-width="3"/>
          <path stroke="#fb0000" stroke-width="3" d="M1512 519l-43 80"/>
          <path fill="#fb0000" d="M1462 613v-17l13 5z"/>
        </g>
      </svg>
      <div class="viewcube"><svg width="44" height="170"><circle cx="68" cy="75" r="55" fill="none" stroke="#2a2a2a" stroke-width="13"/><path fill="#8c8c8c" d="M40 49h4v52h-4zM42 163h2v14h-2z"/></svg><span>西</span></div>

      <div class="cmd">
        <p class="history">指定基点或<code> [</code>位移<code>(D)] &lt;</code>位移<code>&gt;:</code></p>
        <div class="cmdline">
          <div class="grip">
            <svg width="5" height="18"><path stroke="#e4e6e8" stroke-width="2" stroke-dasharray="2 1" d="M1 1v16M4 1v16"/></svg>
            <svg width="9" height="9"><path stroke="#fff" stroke-width="2" d="M0 0l9 9M9 0L0 9"/></svg>
            <svg class="wrench" width="14" height="14"><path stroke="#fff" stroke-width="3" stroke-linecap="round" d="M2 12l7-7"/><path fill="none" stroke="#fff" stroke-width="2" d="M9 1q-2 2 0 4t4 0"/></svg>
          </div>
          <div class="entry">
            <svg width="16" height="12"><path fill="#eee" stroke="#666" d="M.500.500h15v11H.500z"/><path fill="#777" d="M0 0h16v3H0z"/><path fill="none" stroke="#555" d="M3 5l2 2-2 2M6 9.500h4"/></svg><i class="caret"></i>
            <p><b>MOVE</b>指定第二个点或<code> &lt;</code>使用第一个点作为位移<code>&gt;:</code></p>
          </div>
        </div>
      </div>
    </section>

    <footer class="bottom">
      <nav class="layouts" aria-label="布局">
        <button class="on">模型</button><button>布局1</button><button>布局2</button><button class="plus" aria-label="新建布局"><svg width="8" height="8"><path d="M4 0v8M0 4h8"/></svg></button>
      </nav>
      <div class="status">
        <div class="grp"><button class="coords">-30676.1522, 85067.0371, 0.0000</button></div>
        <div class="grp"><button class="model">模型</button></div>
        <div class="grp">
          <button aria-label="栅格"><svg class="i16"><use href="#s-grid"/></svg></button>
          <button aria-label="捕捉"><svg class="i16"><use href="#s-snap"/></svg></button>
          <button class="drop" aria-label="捕捉设置"><i class="caret"></i></button>
        </div>
        <div class="grp">
          <button aria-label="推断约束"><svg class="i16"><use href="#s-infer"/></svg></button>
          <button class="on" aria-label="动态输入"><svg class="i16"><use href="#s-dyn"/></svg></button>
          <button class="on" aria-label="正交"><svg class="i16"><use href="#s-ortho"/></svg></button>
          <button aria-label="极轴追踪"><svg class="i16"><use href="#s-polar"/></svg></button>
          <button class="drop" aria-label="极轴设置"><i class="caret"></i></button>
          <button aria-label="等轴测"><svg class="i16"><use href="#s-iso"/></svg></button>
          <button class="drop" aria-label="等轴测设置"><i class="caret"></i></button>
          <button class="on" aria-label="对象捕捉追踪"><svg class="i16"><use href="#s-otrack"/></svg></button>
          <button class="on" aria-label="对象捕捉"><svg class="i16"><use href="#s-osnap"/></svg></button>
          <button class="drop" aria-label="对象捕捉设置"><i class="caret"></i></button>
          <button aria-label="显示线宽"><svg class="i16"><use href="#s-lw"/></svg></button>
          <button class="on" aria-label="透明度"><svg class="i16"><use href="#s-trans"/></svg></button>
          <button aria-label="选择循环"><svg class="i16"><use href="#s-cycle"/></svg></button>
          <button aria-label="三维对象捕捉"><svg class="i16"><use href="#s-3d"/></svg></button>
          <button class="drop" aria-label="三维捕捉设置"><i class="caret"></i></button>
        </div>
        <div class="grp">
          <button class="on" aria-label="动态 UCS"><svg class="i16"><use href="#s-ucs"/></svg></button>
          <button aria-label="选择过滤"><svg class="i16"><use href="#s-filter"/></svg></button>
          <button class="drop" aria-label="过滤设置"><i class="caret"></i></button>
          <button class="on" aria-label="小控件"><svg class="i16"><use href="#s-gizmo"/></svg></button>
          <button class="drop" aria-label="小控件设置"><i class="caret"></i></button>
        </div>
        <div class="grp">
          <button class="on" aria-label="注释可见性"><svg class="i16"><use href="#s-annovis"/></svg></button>
          <button aria-label="自动缩放"><svg class="i16"><use href="#s-annoauto"/></svg></button>
          <button aria-label="注释比例"><svg class="i16"><use href="#s-anno"/></svg></button>
          <button class="scale">1:1 / 100%<i class="caret"></i></button>
        </div>
        <div class="grp">
          <button aria-label="切换工作空间"><svg class="i16"><use href="#gear"/></svg></button>
          <button class="drop" aria-label="工作空间设置"><i class="caret"></i></button>
          <button aria-label="注释监视器"><svg class="i16"><use href="#s-plus"/></svg></button>
        </div>
        <div class="grp">
          <button class="units"><svg class="i16"><use href="#s-units"/></svg>小数<i class="caret"></i></button>
          <button aria-label="快捷特性"><svg class="i16"><use href="#s-props"/></svg></button>
        </div>
        <div class="grp">
          <button aria-label="锁定用户界面"><svg class="i16"><use href="#s-lockui"/></svg></button>
          <button class="drop" aria-label="锁定设置"><i class="caret"></i></button>
          <button aria-label="隔离对象"><svg class="i16"><use href="#s-isolate"/></svg></button>
        </div>
        <div class="grp edge"></div>
      </div>
    </footer>

    <aside class="ime" aria-label="输入法">
      <button aria-label="搜狗"><svg width="22" height="22" viewBox="0 0 22 22"><path fill="#ee4d22" d="M3 4l13-3q2 0 3 3l1 12q0 2-2 3L7 21q-3 0-3-3L1 7q0-2 2-3z"/><path fill="none" stroke="#fff" stroke-width="3" d="M15 6q-7-1-8 2c0 3 8 2 8 5s-5 4-8 2"/></svg></button>
      <button>中</button>
      <button aria-label="月"><svg width="20" height="20" viewBox="0 0 20 20"><path fill="#66686e" d="M10 1q7 2 7 9-1 8-8 9-4 0-6-3 7 0 8-6 1-4-1-9z"/></svg></button>
      <button aria-label="皮肤"><svg width="22" height="20" viewBox="0 0 22 20"><path fill="#6c6a60" d="M6 1q5 4 10 0l6 6-3 5-2-1v9H5v-9l-2 1-3-5z"/></svg></button>
    </aside>

    <aside class="brand">
      <svg width="66" height="68" viewBox="0 0 66 68"><path fill="none" stroke="#c9cbd0" stroke-width="5" stroke-linejoin="round" stroke-linecap="round" d="M24 51q-8 4-9-4V8q1-7 9-5l31 18q12 9 2 20L28 62Q12 72 4 56"/><path fill="none" stroke="#c9cbd0" stroke-width="5" d="M3 57V18q0-6 4-9"/><path fill="#c9cbd0" d="M25 25l13 8-13 8zM41 26h3v14h-3z"/></svg>
      <div class="words">
        <p class="cn"><span>溜</span><span>溜</span><span>自</span><span>学</span></p>
        <p class="url">zixue.3D66.COM</p>
      </div>
    </aside>
  </main>
</div>
<div class="taskbar"></div>
</body>
</html>
```
FILE: styles.css
```css
:root {
  --dark: #222933;
  --panel: #3b4453;
  --field: #4c5a70;
  --text: #e8eaed;
  --muted: #a8aeb7;
  --active: #5b8cc8;
}

* { box-sizing: border-box; }

body {
  margin: 0;
  height: 100vh;
  display: flex;
  flex-direction: column;
  overflow: hidden;
  border-top: 2px solid #fbf3ec;
  background: var(--dark);
  color: var(--text);
  font: 12px/18px "Noto Sans", "Noto Sans CJK SC", sans-serif;
}

button, input, select {
  margin: 0;
  padding: 0;
  border: 0;
  background: none;
  color: inherit;
  font: inherit;
  white-space: nowrap;
}

h1, h2, p { margin: 0; font-size: 12px; font-weight: 400; }
svg { display: block; flex: none; }
code { white-space: pre; font: 12px "Liberation Mono", monospace; }
.sprite { position: absolute; width: 0; height: 0; }
.i16 { width: 16px; height: 16px; }
.i32 { width: 32px; height: 32px; }

.caret {
  flex: none;
  width: 0;
  border: 4px solid transparent;
  border-top-color: #dfe2e6;
  border-bottom: 0;
}
.caret.sm { border-width: 3px 3px 0; }
.caret.side { border: 5px solid transparent; border-left: 4px solid #dfe2e6; border-right: 0; }

.desktop { flex: 1; min-height: 0; display: flex; }
.shortcuts { width: 9px; overflow: hidden; background: #f7f7f9; }
.taskbar { height: 2px; background: #2a416b; }

.app {
  position: relative;
  flex: 1;
  min-width: 0;
  display: flex;
  flex-direction: column;
  border-left: 4px solid var(--panel);
  border-bottom: 4px solid var(--panel);
}

/* title bar */
.titlebar { height: 30px; display: flex; align-items: center; justify-content: space-between; padding-left: 50px; }
.qat { display: flex; align-items: center; gap: 8px; width: 250px; }
.qat button { display: flex; align-items: center; }
.qat .with-caret { gap: 6px; }
.dim { color: #6a717c; }
.dim .caret { border-top-color: #9a9fa7; }
.qat .customize { flex-direction: column; gap: 2px; }
.bar { width: 8px; height: 2px; background: #dfe2e6; }
.doc-title { display: flex; gap: 20px; line-height: 24px; padding: 0 2px 2px 0; }
.infocenter { display: flex; align-items: center; width: 469px; }
.search { width: 178px; height: 20px; margin-left: 6px; padding: 0 2px; background: #424d61; font-size: 11px; font-style: italic; }
.search::placeholder { color: #b9bfc8; opacity: 1; }
.infocenter button { display: flex; align-items: center; }
.find { margin-left: 6px; }
.login { width: 118px; margin-left: 12px; gap: 7px; }
.login .caret { margin-left: auto; margin-right: 10px; }
.cart { margin-left: 2px; }
.a360 { gap: 6px; margin-left: 9px; padding-right: 10px; height: 20px; border-right: 1px solid #4a515c; }
.help { gap: 8px; margin-left: 10px; }
.help b { width: 14px; height: 14px; border-radius: 50%; background: #eef3fb; color: #2c4f9a; line-height: 14px; }

.appmenu {
  position: absolute;
  left: 0;
  top: 4px;
  width: 41px;
  height: 41px;
  border: 1px solid #000;
  background: linear-gradient(#a9a9a9, #5e5e5e);
}

/* ribbon tabs */
.tabs { display: flex; height: 19px; padding-left: 45px; color: var(--muted); }
.tabs button { padding: 0 10px; line-height: 19px; }
.tabs .on { background: var(--panel); color: #fff; }
.tabs .minimize { display: flex; align-items: center; gap: 5px; margin-left: 12px; }

/* ribbon */
.ribbon { display: flex; height: 97px; padding-left: 2px; }
.panel { display: flex; flex-direction: column; background: var(--panel); border-right: 1px solid var(--dark); }
.panel .body { display: flex; height: 76px; }
.panel h2 { display: flex; justify-content: center; align-items: center; gap: 7px; height: 21px; padding-top: 4px; }
.big { width: 42px; display: flex; flex-direction: column; align-items: center; padding-top: 6px; text-align: center; }
.big svg { margin-bottom: 4px; }
.big .caret { margin-top: 2px; }
.rows { padding-top: 5px; }
.tool { display: flex; align-items: center; gap: 5px; height: 24px; }
.tool .caret { margin-left: 6px; }
.stack { display: flex; flex-direction: column; gap: 2px; padding-top: 6px; }
.iconrow { display: flex; align-items: center; gap: 8px; height: 22px; padding-left: 3px; }

.combo { display: flex; align-items: center; height: 22px; padding: 0 1px 0 3px; background: var(--field); border: 1px solid #2a313d; }
.combo select { flex: 1; min-width: 0; appearance: none; }
.combo .caret { pointer-events: none; }
.swatch { flex: none; width: 16px; height: 16px; background: #fff; }
.rule { flex: none; width: 64px; height: 1px; margin-right: 1px; background: #fff; }
.layer { gap: 3px; padding-left: 2px; }
.layer .swatch { width: 14px; height: 14px; border: 1px solid #000; margin: 0 2px; }
.color .swatch { margin: 0 10px 0 8px; }

.launch { width: 8px; height: 8px; fill: none; stroke: #dfe2e6; }
.p-props h2 .launch { position: absolute; right: 3px; }
.p-props h2 { position: relative; padding-right: 10px; }

.p-draw { width: 210px; }
.p-draw .big { width: 40px; }
.p-draw .big:first-child { margin-left: 1px; }
.p-draw .big:nth-child(4) { width: 44px; }
.p-draw .rows { margin-left: 6px; }
.p-draw .tool .caret { margin-left: 2px; }
.p-modify { width: 227px; }
.p-modify .body { padding-left: 6px; }
.p-modify .rows { width: 60px; }
.p-modify .wide { width: 74px; }
.p-modify .rows:last-child { width: 16px; }
.p-annotate { width: 155px; }
.p-annotate .body { padding-left: 4px; }
.p-annotate .rows { margin-left: 3px; }
.p-annotate .caret { margin-left: 2px; }
.p-annotate .big .caret { margin-left: 0; }
.p-layers { width: 253px; }
.p-layers .body { padding-left: 1px; }
.p-layers .stack { width: 207px; }
.p-block { width: 133px; }
.p-block .rows { margin-left: 3px; }
.p-block .tool .caret { margin-left: 3px; }
.p-props { width: 244px; }
.p-props .big { width: 44px; }
.p-props .stack { width: 179px; margin-left: 3px; }
.p-group { width: 69px; }
.p-group .body { padding-left: 1px; }
.p-group .tool { width: 24px; justify-content: center; }
.p-group .picked { height: 22px; border: 1px solid #7fc1f0; background: #3f5f83; }
.p-util { width: 76px; }
.p-util .big { width: 50px; }
.p-util .rows { margin-left: 3px; }
.p-view { width: 60px; }
.p-view .big { width: 60px; }

/* file tabs */
.filetabs { display: flex; align-items: flex-end; height: 31px; padding-left: 18px; border-bottom: 4px solid var(--panel); color: var(--muted); }
.file { display: flex; align-items: center; width: 132px; height: 22px; padding-left: 13px; background: var(--panel); clip-path: polygon(0 100%, 4px 92%, 12px 8%, 18px 0, 114px 0, 120px 8%, 128px 92%, 100% 100%); }
.file.start { width: 124px; padding-left: 14px; background: #2c3441; clip-path: polygon(0 100%, 9px 8%, 14px 0, 116px 0, 100% 8%, 100% 100%); }
.file.on { color: var(--text); }
.filetabs svg { stroke: #b9bec6; stroke-width: 2; }
.file svg { margin-left: 31px; }
.add { display: flex; align-items: center; justify-content: center; width: 22px; height: 12px; margin: 0 0 5px 1px; background: #303947; border-radius: 4px; }

/* drawing area */
.canvas { position: relative; flex: 1; min-height: 0; overflow: hidden; background: #000; }
.drawing { position: absolute; inset: 0; width: 100%; height: 100%; }
.markup { pointer-events: none; }
.cad { fill: #e8e8e8; stroke: none; font: 14px "Liberation Mono", monospace; }
.note { fill: #fff; stroke: none; font: bold 6px "Noto Sans CJK SC", sans-serif; }
.viewlabel { position: absolute; left: 3px; top: 5px; font-family: "Noto Sans CJK SC", sans-serif; }
.dyn { position: absolute; left: 1123px; top: 479px; display: flex; align-items: flex-start; gap: 4px; }
.dyn label { width: 245px; height: 23px; padding: 0 3px; background: #18145a; color: #dcdcf0; line-height: 18px; }
.dyn input { width: 49px; height: 21px; padding: 0 0 2px 3px; background: #fff; color: #222; border: 1px solid #555; }
.viewcube { position: absolute; right: 0; top: 31px; width: 44px; height: 170px; }
.viewcube span { position: absolute; left: 0; top: 63px; color: #999; font-size: 18px; line-height: 24px; }
.cmd { position: absolute; left: 463px; right: 100px; bottom: 0; }
.cmd p { font: 13px/16px "Noto Sans CJK SC", sans-serif; }
.cmd .history { width: max-content; margin: 0 0 4px 62px; padding: 0 2px; background: #505050; color: #d8d8d8; border-radius: 2px; }
.cmdline { display: flex; height: 27px; background: #2c3440; }
.grip { display: flex; align-items: center; gap: 5px; width: 56px; padding-left: 4px; }
.wrench { margin-left: 8px; }
.entry { flex: 1; display: flex; align-items: center; height: 26px; padding-left: 5px; background: #fff; color: #111; }
.entry .caret { border-top-color: #666; margin: 0 4px 0 3px; }
.entry b { font: bold 11px "Liberation Serif", serif; margin-right: 4px; }

/* layout tabs and status bar */
.bottom { display: flex; justify-content: space-between; height: 29px; border-top: 1px solid #3a3a40; }
.layouts { display: flex; padding-left: 8px; color: var(--muted); }
.layouts button { width: 53px; height: 17px; padding-right: 3px; line-height: 17px; background: #2f3846; clip-path: polygon(0 0, 100% 0, 48px 80%, 44px 100%, 8px 100%, 5px 80%); }
.layouts .on { padding-right: 0; background: var(--panel); color: #fff; font-weight: 700; }
.layouts .plus { display: flex; align-items: center; justify-content: center; width: 24px; margin-left: 4px; clip-path: none; background: #2c3441; }
.layouts svg { stroke: #b9bec6; stroke-width: 2; }
.status { display: flex; gap: 3px; }
.grp { display: flex; height: 25px; background: var(--panel); }
.grp button { display: flex; align-items: center; justify-content: center; width: 25px; }
.grp .on { background: var(--active); border: solid var(--panel); border-width: 1px 1px 2px; }
.grp .drop { width: 14px; }
.grp .coords { width: 210px; justify-content: flex-end; padding-right: 5px; font-family: Roboto, sans-serif; font-size: 12px; }
.grp .model { width: 27px; justify-content: flex-end; }
.grp .scale { width: 69px; gap: 4px; font-family: Roboto, "Noto Sans CJK SC", sans-serif; }
.grp .units { width: 97px; justify-content: flex-start; padding: 0 4px; gap: 9px; }
.grp .units .caret { margin-left: auto; }
.grp.edge { width: 5px; background: var(--active); }

/* floating input method keys */
.ime { position: absolute; right: 234px; top: 16px; display: flex; gap: 2px; background: #111; border-radius: 6px; }
.ime button { display: flex; align-items: center; justify-content: center; width: 35px; height: 40px; background: #fdfdfd; border: 1px solid #b8b8b8; border-bottom: 5px solid #bdbdbd; border-radius: 6px; color: #66686e; font-size: 17px; }

/* site card */
.brand { position: absolute; right: 100px; bottom: 21px; display: flex; align-items: center; width: 340px; height: 160px; padding-left: 26px; gap: 23px; background: #232e54; color: #c9cbd0; }
.words { display: flex; flex-direction: column; gap: 1px; padding-bottom: 4px; }
.cn { display: flex; gap: 11px; font: 900 42px/42px "Noto Sans CJK SC", sans-serif; }
.url { font: 200 23px/30px "DejaVu Sans", sans-serif; }
```
